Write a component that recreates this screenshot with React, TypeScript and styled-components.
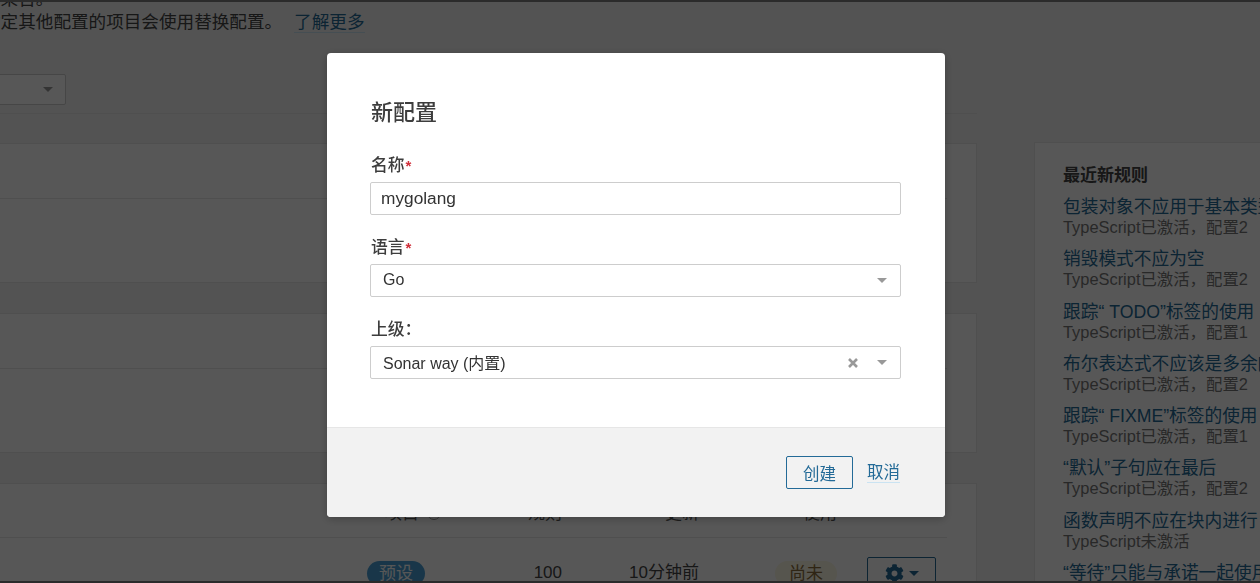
import React from 'react';
import styled, { createGlobalStyle } from 'styled-components';
import { FaCog } from 'react-icons/fa';

const GlobalStyle = createGlobalStyle`
  html, body {
    margin: 0;
    padding: 0;
  }
  body {
    width: 1260px;
    height: 583px;
    overflow: hidden;
    background: #f3f3f3;
    font-family: "Liberation Sans", "Noto Sans CJK SC", sans-serif;
    color: #444;
  }
`;

const blue = '#236a97';

// page behind the dialog (scrolled a little to the right)
const Page = styled.div`
  display: flex;
  gap: 57px;
  width: 1360px;
  margin-left: -17px;
`;

const MainColumn = styled.div`
  width: 994px;
  flex-shrink: 0;
`;

const SideColumn = styled.div`
  width: 300px;
  flex-shrink: 0;
  padding-top: 142px;
`;

const Intro = styled.div`
  padding-bottom: 8px;
  border-bottom: 1px solid #e6e6e6;
  margin-bottom: 29px;
`;

const IntroText = styled.p`
  margin: -12px 0 0;
  font-size: 17.6px;
  line-height: 23px;
  white-space: nowrap;
`;

const IntroLink = styled.a`
  color: ${blue};
  text-decoration: none;
  margin-left: 12px;
  border-bottom: 1px solid #cae3f2;
`;

const LangSelect = styled.div`
  margin-top: 40px;
  width: 83px;
  height: 31px;
  box-sizing: border-box;
  background: #fff;
  border: 1px solid #ccc;
  border-radius: 2px;
  display: flex;
  align-items: center;
  justify-content: flex-end;
  padding-right: 12px;
`;

const Card = styled.div`
  background: #fff;
  border: 1px solid #e6e6e6;
  margin-bottom: 30px;
`;

const CardRow = styled.div<{ $h: number }>`
  height: ${(p) => p.$h}px;
  margin-right: 29px;
  border-bottom: 1px solid #e6e6e6;
  &:last-child {
    border-bottom: none;
  }
`;

const TableRow = styled.div<{ $head?: boolean }>`
  display: grid;
  grid-template-columns: 377px 90px 111px 137px 138px 99px;
  align-items: ${(p) => (p.$head ? 'end' : 'center')};
  height: ${(p) => (p.$head ? 54 : 70)}px;
  box-sizing: border-box;
  padding: ${(p) => (p.$head ? '0 13px 12px 0' : '0 13px 0 0')};
  margin-right: 29px;
  border-bottom: ${(p) => (p.$head ? '1px solid #e6e6e6' : 'none')};
  font-size: 17px;
  line-height: 22px;
`;

const Cell = styled.div<{ $align?: string; $pad?: number }>`
  text-align: ${(p) => p.$align || 'right'};
  padding-left: ${(p) => p.$pad || 0}px;
  white-space: nowrap;
`;

const HeadCell = styled(Cell)`
  color: #555;
`;

const InfoDot = styled.span`
  display: inline-block;
  width: 12px;
  height: 12px;
  border: 1px solid #999;
  border-radius: 50%;
  margin-left: 8px;
  vertical-align: -1px;
`;

const Pill = styled.span<{ $kind: 'blue' | 'warn' }>`
  display: inline-block;
  height: 25px;
  line-height: 25px;
  padding: 0 ${(p) => (p.$kind === 'blue' ? 12 : 14)}px;
  border-radius: 13px;
  background: ${(p) => (p.$kind === 'blue' ? '#4b9fd5' : '#fcf8e3')};
  color: ${(p) => (p.$kind === 'blue' ? '#fff' : '#8a6d3b')};
  font-size: 17px;
`;

const GearButton = styled.span`
  display: inline-flex;
  align-items: center;
  justify-content: center;
  gap: 5px;
  width: 69px;
  height: 33px;
  box-sizing: border-box;
  border: 1px solid ${blue};
  border-radius: 2px;
  background: #fff;
  color: ${blue};
  font-size: 19px;
`;

const SideCard = styled.div`
  background: #fff;
  border: 1px solid #e6e6e6;
  padding: 23px 0 40px 28px;
  height: 600px;
`;

const SideTitle = styled.h3`
  margin: 0 0 11px;
  font-size: 17px;
  line-height: 20px;
  font-weight: bold;
  color: #444;
`;

const RuleItem = styled.div`
  margin-bottom: 12.3px;
  white-space: nowrap;
`;

const RuleLink = styled.a`
  display: block;
  color: ${blue};
  font-size: 17.7px;
  line-height: 20px;
  text-decoration: none;
`;

const RuleMeta = styled.div`
  color: #777;
  font-size: 16.4px;
  line-height: 20px;
`;

// dialog
const Backdrop = styled.div`
  position: fixed;
  inset: 0;
  background: rgba(0, 0, 0, 0.66);
  box-shadow: inset 0 2px 0 #2b2b2b, inset 0 -2px 0 #2b2b2b;
`;

const Modal = styled.div`
  position: absolute;
  left: 327px;
  top: 53px;
  width: 618px;
  background: #fff;
  border-radius: 4px;
  overflow: hidden;
  box-shadow: 0 2px 8px rgba(0, 0, 0, 0.25);
`;

const ModalBody = styled.div`
  padding: 48px 44px 48px 43px;
`;

const ModalTitle = styled.h2`
  margin: 0 0 31px 1px;
  font-size: 22px;
  line-height: 24px;
  font-weight: 500;
  color: #3d3d3d;
`;

const Field = styled.div`
  margin-bottom: 23px;
  &:last-child {
    margin-bottom: 0;
  }
`;

const Label = styled.label`
  display: block;
  margin: 0 0 6px 1px;
  font-size: 16.8px;
  line-height: 20px;
  font-weight: 500;
  color: #3d3d3d;
`;

const Required = styled.span`
  color: #d02f3a;
  font-size: 15px;
  font-weight: bold;
  margin-left: 1px;
`;

const TextInput = styled.input`
  display: block;
  width: 100%;
  height: 33px;
  box-sizing: border-box;
  border: 1px solid #cdcdcd;
  border-radius: 2px;
  padding: 0 10px;
  font-family: inherit;
  font-size: 17.3px;
  color: #333;
  outline: none;
`;

const SelectBox = styled.div`
  display: flex;
  align-items: center;
  height: 33px;
  box-sizing: border-box;
  border: 1px solid #cdcdcd;
  border-radius: 2px;
  padding: 0 13px 0 12px;
  font-size: 16px;
  color: #333;
`;

const SelectValue = styled.span`
  flex: 1;
  padding-bottom: 2px;
`;

const ClearIcon = styled.svg`
  margin-right: 19px;
`;

const ModalFooter = styled.div`
  height: 90px;
  box-sizing: border-box;
  background: #f2f2f2;
  border-top: 1px solid #e6e6e6;
  display: flex;
  align-items: center;
  justify-content: flex-end;
  gap: 14px;
  padding-right: 45px;
`;

const PrimaryButton = styled.button`
  width: 67px;
  height: 33px;
  border: 1px solid ${blue};
  border-radius: 2px;
  background: transparent;
  color: ${blue};
  font-family: inherit;
  font-size: 16.5px;
  padding: 0;
`;

const CancelLink = styled.a`
  color: ${blue};
  font-size: 16.5px;
  line-height: 20px;
  text-decoration: none;
  border-bottom: 1px solid #cae3f2;
`;

const Caret = ({ color = '#999' }: { color?: string }) => (
  <svg width="10" height="5" viewBox="0 0 10 5">
    <path d="M0 0 L10 0 L5 5 Z" fill={color} />
  </svg>
);

const rules = [
  ['包装对象不应用于基本类型', 'TypeScript已激活，配置2'],
  ['销毁模式不应为空', 'TypeScript已激活，配置2'],
  ['跟踪“ TODO”标签的使用', 'TypeScript已激活，配置1'],
  ['布尔表达式不应该是多余的', 'TypeScript已激活，配置2'],
  ['跟踪“ FIXME”标签的使用', 'TypeScript已激活，配置1'],
  ['“默认”子句应在最后', 'TypeScript已激活，配置2'],
  ['函数声明不应在块内进行', 'TypeScript未激活'],
  ['“等待”只能与承诺一起使用', 'TypeScript已激活，配置2'],
];

export default function App() {
  return (
    <>
      <GlobalStyle />
      <Page>
        <MainColumn>
          <Intro>
            <IntroText>
              结果告。
              <br />
              指定其他配置的项目会使用替换配置。
              <IntroLink>了解更多</IntroLink>
            </IntroText>
            <LangSelect>
              <Caret />
            </LangSelect>
          </Intro>

          <Card>
            <CardRow $h={54} />
            <CardRow $h={83} />
          </Card>
          <Card>
            <CardRow $h={54} />
            <CardRow $h={83} />
          </Card>
          <Card>
            <TableRow $head>
              <HeadCell />
              <HeadCell $align="left" $pad={24}>
                项目<InfoDot />
              </HeadCell>
              <HeadCell>规则</HeadCell>
              <HeadCell>更新</HeadCell>
              <HeadCell>使用</HeadCell>
              <HeadCell />
            </TableRow>
            <TableRow>
              <Cell />
              <Cell $align="left" $pad={6}>
                <Pill $kind="blue">预设</Pill>
              </Cell>
              <Cell>100</Cell>
              <Cell>10分钟前</Cell>
              <Cell>
                <Pill $kind="warn">尚未</Pill>
              </Cell>
              <Cell>
                <GearButton>
                  <FaCog />
                  <Caret color={blue} />
                </GearButton>
              </Cell>
            </TableRow>
          </Card>
        </MainColumn>

        <SideColumn>
          <SideCard>
            <SideTitle>最近新规则</SideTitle>
            {rules.map(([name, meta]) => (
              <RuleItem key={name}>
                <RuleLink>{name}</RuleLink>
                <RuleMeta>{meta}</RuleMeta>
              </RuleItem>
            ))}
          </SideCard>
        </SideColumn>
      </Page>

      <Backdrop>
        <Modal>
          <ModalBody>
            <ModalTitle>新配置</ModalTitle>
            <Field>
              <Label>
                名称<Required>*</Required>
              </Label>
              <TextInput defaultValue="mygolang" />
            </Field>
            <Field>
              <Label>
                语言<Required>*</Required>
              </Label>
              <SelectBox>
                <SelectValue>Go</SelectValue>
                <Caret />
              </SelectBox>
            </Field>
            <Field>
              <Label>上级：</Label>
              <SelectBox>
                <SelectValue>Sonar way (内置)</SelectValue>
                <ClearIcon width="10" height="10" viewBox="0 0 10 10">
                  <path d="M1 1 L9 9 M9 1 L1 9" stroke="#999" strokeWidth="2.6" />
                </ClearIcon>
                <Caret />
              </SelectBox>
            </Field>
          </ModalBody>
          <ModalFooter>
            <PrimaryButton>创建</PrimaryButton>
            <CancelLink>取消</CancelLink>
          </ModalFooter>
        </Modal>
      </Backdrop>
    </>
  );
}
